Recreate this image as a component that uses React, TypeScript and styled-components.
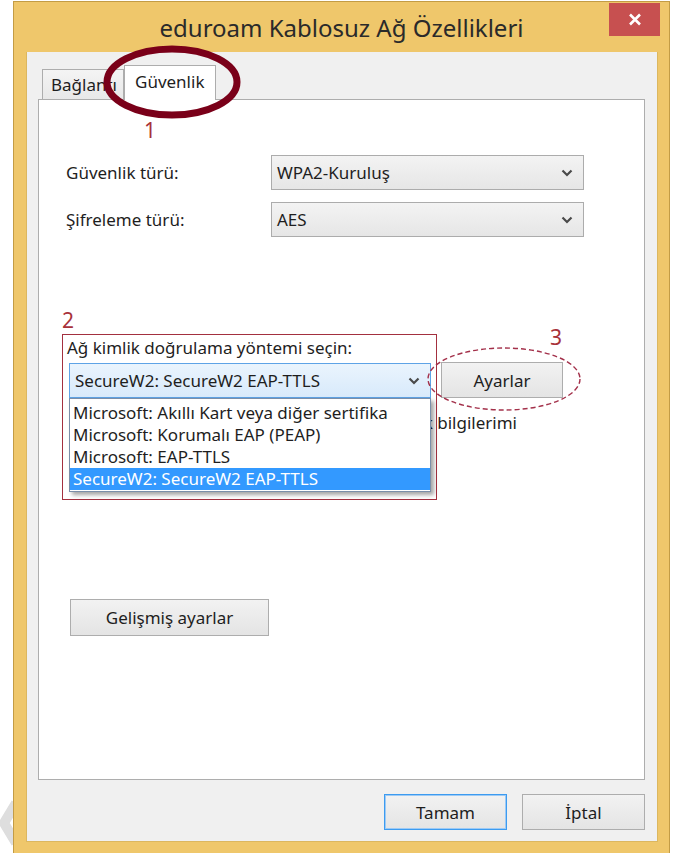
import { createGlobalStyle, styled } from "styled-components";

const GlobalStyle = createGlobalStyle`
  html, body {
    margin: 0;
    height: 100%;
    overflow: hidden;
    background: #ffffff;
  }
  body {
    font-family: "Noto Sans", "Open Sans", sans-serif;
    font-size: 17px;
    color: #1e1e1e;
  }
  * {
    box-sizing: border-box;
  }
`;

const Page = styled.div`
  position: relative;
  height: 853px;
  padding: 1px 0 0 13px;
`;

const Watermark = styled.svg`
  position: absolute;
  left: 0;
  top: 795px;
  z-index: 0;
`;

const Window = styled.div`
  position: relative;
  z-index: 1;
  width: 657px;
  height: 856px;
  background: #efc76b;
  border: 1px solid #c39c45;
  display: flex;
  flex-direction: column;
`;

const TitleBar = styled.div`
  height: 50px;
  flex: none;
  display: grid;
  grid-template-columns: 1fr auto 1fr;
  align-items: start;
`;

const Title = styled.div`
  grid-column: 2;
  font-size: 24px;
  line-height: 52px;
  color: #2a2a2a;
  white-space: nowrap;
`;

const CloseButton = styled.button`
  grid-column: 3;
  justify-self: end;
  margin: 1px 9px 0 0;
  width: 51px;
  height: 33px;
  padding: 0;
  border: 0;
  background: #c75050;
  display: flex;
  align-items: center;
  justify-content: center;
`;

const Client = styled.div`
  flex: none;
  height: 790px;
  margin: 0 11px 0 12px;
  padding: 13px 12px 0 11px;
  background: #f0f0f0;
  border: 1px solid #dcb75f;
  border-top: 0;
  display: flex;
  flex-direction: column;
`;

const TabStrip = styled.div`
  display: flex;
  align-items: flex-end;
  height: 35px;
  padding-left: 4px;
  margin-bottom: -1px;
  position: relative;
  z-index: 1;
`;

const Tab = styled.div<{ $active?: boolean }>`
  height: ${(p) => (p.$active ? "35px" : "31px")};
  width: ${(p) => (p.$active ? "92px" : "82px")};
  padding: ${(p) => (p.$active ? "4px 0 0 10px" : "3px 0 0 8px")};
  border: 1px solid #adadad;
  border-bottom: ${(p) => (p.$active ? "0" : "1px solid #adadad")};
  background: ${(p) =>
    p.$active ? "#ffffff" : "linear-gradient(#f4f4f4, #e8e8e8)"};
  color: #1e1e1e;
  overflow: hidden;
  white-space: nowrap;
  font-size: 17px;
`;

const Panel = styled.div`
  height: 681px;
  flex: none;
  background: #ffffff;
  border: 1px solid #adadad;
  padding: 55px 0 0 27px;
`;

const FormRow = styled.div`
  display: grid;
  grid-template-columns: 205px 313px;
  align-items: center;
  height: 35px;
  margin-bottom: 12px;
`;

const Label = styled.span`
  color: #1e1e1e;
`;

const Combo = styled.div<{ $open?: boolean; $width?: number }>`
  width: ${(p) => (p.$width ? `${p.$width}px` : "100%")};
  height: 35px;
  display: flex;
  align-items: center;
  justify-content: space-between;
  padding: 0 10px 0 5px;
  border: 1px solid ${(p) => (p.$open ? "#5ea3e6" : "#acacac")};
  background: ${(p) =>
    p.$open
      ? "linear-gradient(#eaf4fd, #d8eafb)"
      : "linear-gradient(#f3f3f3, #e6e6e6)"};
  color: #1e1e1e;
  white-space: nowrap;
`;

const AuthSection = styled.div`
  display: flex;
  align-items: flex-start;
  margin: 97px 0 0 -4px;
`;

const RedBox = styled.div`
  position: relative;
  width: 375px;
  height: 166px;
  border: 1.5px solid #a3303f;
  padding: 1px 0 0 4px;
`;

const SectionLabel = styled.div`
  line-height: 24px;
`;

const ComboWrap = styled.div`
  position: relative;
  z-index: 2;
  margin: 3px 0 0 2px;
  width: 362px;
`;

const DropList = styled.ul`
  position: absolute;
  top: 100%;
  left: 0;
  width: 362px;
  margin: 0;
  padding: 3px 0 1px;
  list-style: none;
  background: #ffffff;
  border: 1px solid #7a8ea8;
  box-shadow: 3px 3px 4px rgba(0, 0, 0, 0.35);
`;

const DropItem = styled.li<{ $selected?: boolean }>`
  height: 22px;
  line-height: 22px;
  padding-left: 3px;
  white-space: nowrap;
  background: ${(p) => (p.$selected ? "#3399ff" : "transparent")};
  color: ${(p) => (p.$selected ? "#ffffff" : "#1e1e1e")};
`;

/* the remember-credentials row sits under the open list; only its tail shows */
const CheckRow = styled.div`
  display: flex;
  justify-content: flex-end;
  align-items: center;
  gap: 6px;
  width: 450px;
  margin-top: 13px;
  white-space: nowrap;
`;

const CheckBox = styled.span`
  width: 13px;
  height: 13px;
  flex: none;
  border: 1px solid #707070;
  background: #ffffff;
`;

const Button = styled.button<{ $w: number; $default?: boolean }>`
  width: ${(p) => p.$w}px;
  height: 36px;
  padding: 0;
  font-family: inherit;
  font-size: 17px;
  color: #1e1e1e;
  border: 1px solid ${(p) => (p.$default ? "#3c9bf0" : "#adadad")};
  background: linear-gradient(#f2f2f2, #e4e4e4);
  box-shadow: ${(p) => (p.$default ? "inset 0 0 0 1px #9dcaf5" : "none")};
`;

const SideButton = styled(Button)`
  margin: 28px 0 0 4px;
`;

const AdvancedButton = styled(Button)`
  display: block;
  height: 37px;
  margin: 99px 0 0 4px;
`;

const Footer = styled.div`
  display: flex;
  justify-content: flex-end;
  gap: 15px;
  padding-top: 14px;
`;

const Overlay = styled.svg`
  position: absolute;
  left: 0;
  top: 0;
  z-index: 5;
  pointer-events: none;
`;

const Mark = styled.span<{ $x: number; $y: number }>`
  position: absolute;
  z-index: 5;
  left: ${(p) => p.$x}px;
  top: ${(p) => p.$y}px;
  font-size: 21px;
  line-height: 1;
  color: #a8323a;
`;

const Chevron = () => (
  <svg width="12" height="8" viewBox="0 0 12 8">
    <path d="M1.5 1.5 L6 6 L10.5 1.5" fill="none" stroke="#4a4a4a" strokeWidth="2.2" />
  </svg>
);

const methods = [
  "Microsoft: Akıllı Kart veya diğer sertifika",
  "Microsoft: Korumalı EAP (PEAP)",
  "Microsoft: EAP-TTLS",
  "SecureW2: SecureW2 EAP-TTLS",
];

export default function App() {
  return (
    <Page>
      <GlobalStyle />
      <Watermark width="14" height="58" viewBox="0 0 14 58">
        <path d="M16 8 L4 28 L16 48" fill="none" stroke="#dedede" strokeWidth="10" />
      </Watermark>

      <Window>
        <TitleBar>
          <Title>eduroam Kablosuz Ağ Özellikleri</Title>
          <CloseButton>
            <svg width="14" height="13" viewBox="0 0 14 13">
              <path d="M2 1.5 L12 11.5 M12 1.5 L2 11.5" stroke="#ffffff" strokeWidth="2.6" />
            </svg>
          </CloseButton>
        </TitleBar>

        <Client>
          <TabStrip>
            <Tab>Bağlantı</Tab>
            <Tab $active>Güvenlik</Tab>
          </TabStrip>

          <Panel>
            <FormRow>
              <Label>Güvenlik türü:</Label>
              <Combo>
                WPA2-Kuruluş
                <Chevron />
              </Combo>
            </FormRow>
            <FormRow>
              <Label>Şifreleme türü:</Label>
              <Combo>
                AES
                <Chevron />
              </Combo>
            </FormRow>

            <AuthSection>
              <RedBox>
                <SectionLabel>Ağ kimlik doğrulama yöntemi seçin:</SectionLabel>
                <ComboWrap>
                  <Combo $open $width={362}>
                    SecureW2: SecureW2 EAP-TTLS
                    <Chevron />
                  </Combo>
                  <DropList>
                    {methods.map((m, i) => (
                      <DropItem key={m} $selected={i === methods.length - 1}>
                        {m}
                      </DropItem>
                    ))}
                  </DropList>
                </ComboWrap>
                <CheckRow>
                  <CheckBox />
                  Oturum açışımda bu bağlantı için kimlik bilgilerimi
                </CheckRow>
              </RedBox>
              <SideButton $w={122}>Ayarlar</SideButton>
            </AuthSection>

            <AdvancedButton $w={199}>Gelişmiş ayarlar</AdvancedButton>
          </Panel>

          <Footer>
            <Button $w={123} $default>
              Tamam
            </Button>
            <Button $w={123}>İptal</Button>
          </Footer>
        </Client>
      </Window>

      <Overlay width="676" height="853" viewBox="0 0 676 853">
        <ellipse cx="172" cy="82" rx="65" ry="33" fill="none" stroke="#7a0019" strokeWidth="7" />
        <ellipse
          cx="504"
          cy="379"
          rx="76"
          ry="31"
          fill="none"
          stroke="#a3304a"
          strokeWidth="1.4"
          strokeDasharray="5 3"
        />
      </Overlay>
      <Mark $x={144} $y={120}>1</Mark>
      <Mark $x={62} $y={310}>2</Mark>
      <Mark $x={550} $y={327}>3</Mark>
    </Page>
  );
}
